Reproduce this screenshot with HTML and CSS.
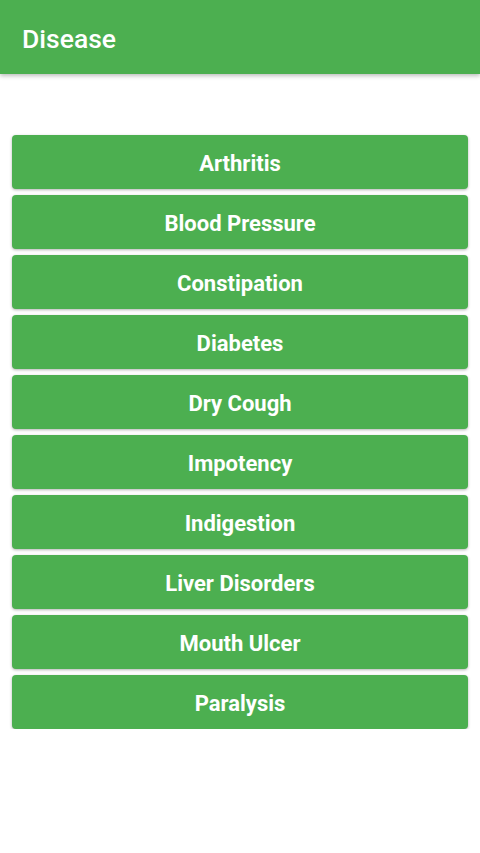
FILE: index.html
```html
<!DOCTYPE html>
<html lang="en">
<head>
<meta charset="UTF-8">
<meta name="viewport" content="width=device-width, initial-scale=1.0">
<title>Disease</title>
<link rel="stylesheet" href="styles.css">
</head>
<body>

<div class="app-bar">
    <h1>Disease</h1>
</div>

<div class="disease-list">
    <button class="disease-button">Arthritis</button>
    <button class="disease-button">Blood Pressure</button>
    <button class="disease-button">Constipation</button>
    <button class="disease-button">Diabetes</button>
    <button class="disease-button">Dry Cough</button>
    <button class="disease-button">Impotency</button>
    <button class="disease-button">Indigestion</button>
    <button class="disease-button">Liver Disorders</button>
    <button class="disease-button">Mouth Ulcer</button>
    <button class="disease-button">Paralysis</button>
</div>

</body>
</html>
```

FILE: styles.css
```css
body {
    font-family: Roboto, "Noto Sans", sans-serif;
    background-color: #fff;
    margin: 0;
}

.app-bar {
    height: 74px;
    box-sizing: border-box;
    background-color: #4caf50;
    display: flex;
    align-items: center;
    padding: 3px 22px 0 22px;
    box-shadow: 0 2px 4px rgba(0, 0, 0, 0.25);
}

.app-bar h1 {
    margin: 0;
    color: #fff;
    font-size: 26.5px;
    font-weight: 500;
}

.disease-list {
    display: flex;
    flex-direction: column;
    gap: 6px;
    padding: 61px 12px 0 12px;
}

.disease-button {
    height: 54px;
    padding: 3px 0 0 0;
    background-color: #4caf50;
    color: #fff;
    border: none;
    border-radius: 4px;
    font-family: Roboto, sans-serif;
    font-size: 22px;
    font-weight: 700;
    box-shadow: 0 1px 3px rgba(0, 0, 0, 0.3);
    cursor: pointer;
}
```
